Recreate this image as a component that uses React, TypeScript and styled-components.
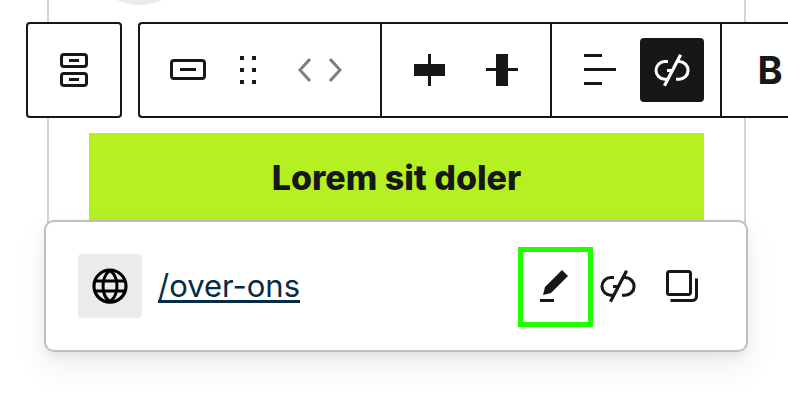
import React from "react";
import styled, { createGlobalStyle } from "styled-components";

const GlobalStyle = createGlobalStyle`
  *, *::before, *::after { box-sizing: border-box; }
  body { margin: 0; background: #fff; overflow-x: hidden; }
`;

const ink = "#171717";

const Page = styled.main`
  display: grid;
  grid-template-columns: minmax(0, 1fr);
  align-items: start;
  overflow: hidden;
  padding-bottom: 48px;
  font-family: Inter, "Liberation Sans", sans-serif;
  color: ${ink};
`;

const Canvas = styled.section`
  grid-area: 1 / 1;
  position: relative;
  margin: 0 42px 0 47px;
  padding: 133px 40px 40px;
  border: solid #d5d5d5;
  border-width: 0 2px;
`;

const Avatar = styled.span`
  position: absolute;
  top: -102px;
  left: 37px;
  width: 107px;
  height: 107px;
  border-radius: 50%;
  background: #ebebeb;
`;

const CallToAction = styled.button`
  display: block;
  width: 100%;
  padding: 24px;
  border: 0;
  background: #b5f023;
  color: ${ink};
  font: 800 34px/42px Inter, "Liberation Sans", sans-serif;
  text-align: center;
`;

const Overlay = styled.div`
  grid-area: 1 / 1;
  z-index: 1;
  display: flex;
  flex-direction: column;
  gap: 102px;
  padding-top: 22px;
`;

const ToolbarRow = styled.div`
  display: flex;
  gap: 16px;
  padding-left: 26px;
`;

const Toolbar = styled.div<{ $open?: boolean }>`
  display: flex;
  flex: ${(p) => (p.$open ? "1 0 auto" : "none")};
  background: #fff;
  border: 2px solid ${ink};
  border-right-width: ${(p) => (p.$open ? 0 : "2px")};
  border-radius: ${(p) => (p.$open ? "4px 0 0 4px" : "4px")};
`;

const Group = styled.div<{ $flush?: boolean }>`
  display: flex;
  align-items: center;
  gap: ${(p) => (p.$flush ? 0 : "8px")};
  padding: 14px ${(p) => (p.$flush ? "32px" : "16px")} 14px 16px;

  & + & {
    border-left: 2px solid ${ink};
  }
`;

const IconButton = styled.button<{ $active?: boolean; $width?: number }>`
  position: relative;
  display: flex;
  flex: none;
  align-items: center;
  justify-content: center;
  width: ${(p) => p.$width ?? 64}px;
  height: 64px;
  padding: 0;
  border: 0;
  border-radius: 4px;
  background: ${(p) => (p.$active ? ink : "transparent")};
  color: ${(p) => (p.$active ? "#fff" : ink)};
  font: 700 38px/64px Inter, "Liberation Sans", sans-serif;

  &:disabled {
    color: #808080;
  }
`;

const Movers = styled.div`
  display: flex;
  margin-left: 16px;
`;

const Glyph = styled.svg`
  flex: none;
  width: 48px;
  height: 48px;
  fill: currentColor;
`;

const LinkPopover = styled.section`
  display: flex;
  align-items: center;
  margin: 0 40px 0 44px;
  padding: 32px;
  border: 2px solid #bfbfbf;
  border-radius: 10px;
  background: #fff;
  box-shadow: 0 4px 10px rgba(0, 0, 0, 0.06), 0 16px 32px rgba(0, 0, 0, 0.07);
`;

const SiteIcon = styled.span`
  display: flex;
  flex: none;
  align-items: center;
  justify-content: center;
  width: 64px;
  height: 64px;
  margin-right: 16px;
  border-radius: 4px;
  background: #ebebeb;
  color: #000;
`;

const Url = styled.a`
  margin-right: auto;
  color: #062b49;
  font-size: 31px;
  line-height: 40px;
  text-decoration: underline;
  text-decoration-thickness: 3px;
  text-underline-offset: 3px;
`;

const Highlight = styled.span`
  position: absolute;
  inset: -7px -7px -9px -4px;
  border: 5px solid #21ff00;
  pointer-events: none;
`;

const paths = {
  buttons:
    "M14.5 17.5h-5V16h5v1.5Zm0-9.5h-5V6.5h5V8ZM7 3.5h10a2 2 0 0 1 2 2V9a2 2 0 0 1-2 2H7a2 2 0 0 1-2-2V5.5a2 2 0 0 1 2-2ZM17 5H7a.5.5 0 0 0-.5.5V9a.5.5 0 0 0 .5.5h10a.5.5 0 0 0 .5-.5V5.5A.5.5 0 0 0 17 5ZM7 13h10a2 2 0 0 1 2 2v3.5a2 2 0 0 1-2 2H7a2 2 0 0 1-2-2V15a2 2 0 0 1 2-2Zm10 1.5H7a.5.5 0 0 0-.5.5v3.5a.5.5 0 0 0 .5.5h10a.5.5 0 0 0 .5-.5V15a.5.5 0 0 0-.5-.5Z",
  button:
    "M8 12.5h8V11H8v1.5ZM19 6.5H5a2 2 0 0 0-2 2V15a2 2 0 0 0 2 2h14a2 2 0 0 0 2-2V8.5a2 2 0 0 0-2-2ZM5 8h14a.5.5 0 0 1 .5.5V15a.5.5 0 0 1-.5.5H5a.5.5 0 0 1-.5-.5V8.5A.5.5 0 0 1 5 8Z",
  drag: "M8 7h2V5H8v2zm0 6h2v-2H8v2zm0 6h2v-2H8v2zm6-14v2h2V5h-2zm0 8h2v-2h-2v2zm0 6h2v-2h-2v2z",
  chevronLeft: "M14.6 7l-1.2-1L8 12l5.4 6 1.2-1-4.6-5z",
  chevronRight: "M10.6 6L9.4 7l4.6 5-4.6 5 1.2 1 5.4-6z",
  justifyCenter: "M12.5 15v5H11v-5H4V9h7V4h1.5v5h7v6h-7Z",
  alignMiddle: "M20 11h-5V4H9v7H4v1.5h5V20h6v-7.5h5z",
  alignLeft: "M13 5.5H4V4h9v1.5Zm7 7H4V11h16v1.5Zm-7 7H4V18h9v1.5Z",
  unlink:
    "M17.031 4.703 15.576 4l-1.56 3H14v.03l-2.324 4.47H9.5V13h1.396l-1.502 2.889h-.95a3.694 3.694 0 0 1 0-7.389H10V7H8.444a5.194 5.194 0 1 0 0 10.389h.17L7.5 19.53l1.416.719L15.049 8.5h.507a3.694 3.694 0 0 1 0 7.39H14v1.5h1.556a5.194 5.194 0 0 0 .273-10.383l1.202-2.304Z",
  globe:
    "M12 3.3c-4.8 0-8.8 3.9-8.8 8.8 0 4.8 3.9 8.8 8.8 8.8s8.8-3.9 8.8-8.8c0-4.8-4-8.8-8.8-8.8zm6.5 5.5h-2.6C15.4 7.3 14.8 6 14 5c2 .6 3.6 2 4.5 3.8zm.7 3.2c0 .6-.1 1.2-.2 1.8h-2.9c.1-.6.1-1.2.1-1.8s-.1-1.2-.1-1.8H19c.2.6.2 1.2.2 1.8zM12 18.7c-1-.7-1.8-1.9-2.3-3.5h4.6c-.5 1.6-1.3 2.9-2.3 3.5zm-2.6-4.9c-.1-.6-.1-1.1-.1-1.8 0-.6.1-1.2.1-1.8h5.2c.1.6.1 1.1.1 1.8s-.1 1.2-.1 1.8H9.4zM4.8 12c0-.6.1-1.2.2-1.8h2.9c-.1.6-.1 1.2-.1 1.8 0 .6.1 1.2.1 1.8H5c-.2-.6-.2-1.2-.2-1.8zM12 5.3c1 .7 1.8 1.9 2.3 3.5H9.7c.5-1.6 1.3-2.9 2.3-3.5zM10 5c-.8 1-1.4 2.3-1.8 3.8H5.5C6.4 7 8 5.6 10 5zM5.5 15.3h2.6c.4 1.5 1 2.8 1.8 3.7-1.8-.6-3.5-2-4.4-3.7zM14 19c.8-1 1.4-2.2 1.8-3.7h2.6C17.6 17 16 18.4 14 19z",
  pencil: "m19 7-3-3-8.5 8.5-1 4 4-1L19 7Zm-7 11.5H5V20h7v-1.5Z",
  copy: "M5.625 5.5h9.75c.069 0 .125.056.125.125v9.75a.125.125 0 0 1-.125.125h-9.75a.125.125 0 0 1-.125-.125v-9.75c0-.069.056-.125.125-.125ZM4 5.625C4 4.728 4.728 4 5.625 4h9.75C16.273 4 17 4.728 17 5.625v9.75c0 .898-.727 1.625-1.625 1.625h-9.75A1.625 1.625 0 0 1 4 15.375v-9.75Zm14.5 11.656v-9H20v9C20 18.8 18.77 20 17.251 20H6.25v-1.5h11.001c.69 0 1.249-.528 1.249-1.219Z",
};

function Icon({ name }: { name: keyof typeof paths }) {
  return (
    <Glyph viewBox="0 0 24 24" aria-hidden="true">
      <path d={paths[name]} fillRule="evenodd" clipRule="evenodd" />
    </Glyph>
  );
}

export default function App() {
  return (
    <>
      <GlobalStyle />
      <Page>
        <Canvas>
          <Avatar />
          <CallToAction type="button">Lorem sit doler</CallToAction>
        </Canvas>
        <Overlay>
          <ToolbarRow>
            <Toolbar role="toolbar" aria-label="Parent block">
              <Group>
                <IconButton type="button" $width={60} aria-label="Select parent block: Buttons">
                  <Icon name="buttons" />
                </IconButton>
              </Group>
            </Toolbar>
            <Toolbar $open role="toolbar" aria-label="Block tools">
              <Group $flush>
                <IconButton type="button" aria-label="Button">
                  <Icon name="button" />
                </IconButton>
                <IconButton type="button" $width={56} aria-label="Drag">
                  <Icon name="drag" />
                </IconButton>
                <Movers>
                  <IconButton type="button" disabled $width={28} aria-label="Move left">
                    <Icon name="chevronLeft" />
                  </IconButton>
                  <IconButton type="button" disabled $width={28} aria-label="Move right">
                    <Icon name="chevronRight" />
                  </IconButton>
                </Movers>
              </Group>
              <Group>
                <IconButton type="button" aria-label="Justify items">
                  <Icon name="justifyCenter" />
                </IconButton>
                <IconButton type="button" aria-label="Align middle">
                  <Icon name="alignMiddle" />
                </IconButton>
              </Group>
              <Group>
                <IconButton type="button" aria-label="Align text">
                  <Icon name="alignLeft" />
                </IconButton>
                <IconButton type="button" $active aria-pressed="true" aria-label="Unlink">
                  <Icon name="unlink" />
                </IconButton>
              </Group>
              <Group>
                <IconButton type="button" aria-label="Bold">
                  B
                </IconButton>
              </Group>
            </Toolbar>
          </ToolbarRow>
          <LinkPopover aria-label="Link settings">
            <SiteIcon>
              <Icon name="globe" />
            </SiteIcon>
            <Url href="/over-ons">/over-ons</Url>
            <IconButton type="button" aria-label="Edit link">
              <Icon name="pencil" />
              <Highlight />
            </IconButton>
            <IconButton type="button" aria-label="Remove link">
              <Icon name="unlink" />
            </IconButton>
            <IconButton type="button" aria-label="Copy link">
              <Icon name="copy" />
            </IconButton>
          </LinkPopover>
        </Overlay>
      </Page>
    </>
  );
}
